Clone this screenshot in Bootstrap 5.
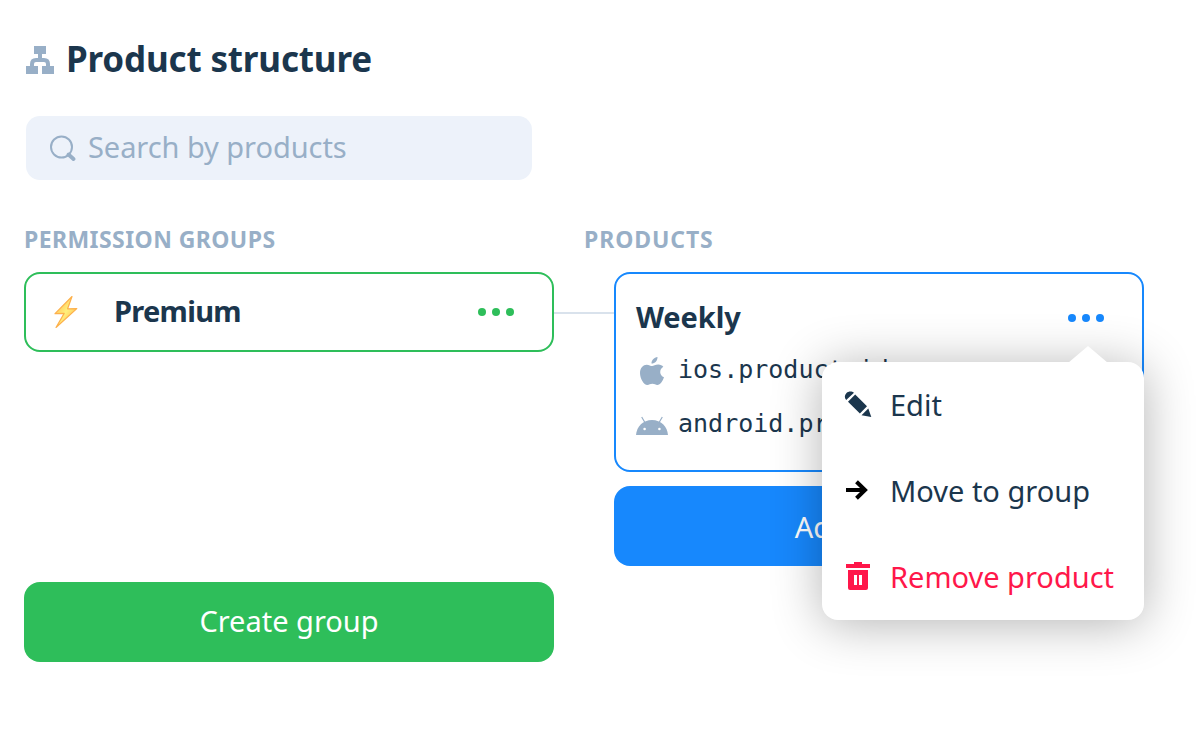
<!DOCTYPE html>
<html lang="en">
<head>
<meta charset="utf-8">
<meta name="viewport" content="width=device-width, initial-scale=1">
<title>Product structure</title>
<link href="https://cdn.jsdelivr.net/npm/bootstrap@5.3.0/dist/css/bootstrap.min.css" rel="stylesheet">
<style>
  :root { --ink: #1b364d; --muted: #98afc7; --green: #2ebe5a; --blue: #1788fd; --red: #ff174a; }
  body { font-family: "Noto Sans", "Open Sans", sans-serif; color: var(--ink); font-size: 29px; line-height: 40px; background: #fff; min-height: 100vh; }
  svg { display: block; flex: none; }
  .page { padding: 35px 52px 0 24px; }
  .page-title { font-size: 35px; line-height: 48px; font-weight: 700; letter-spacing: -.17px; padding: 0 0 2px 10px; }
  .search-box { width: 506px; height: 64px; margin: 31px 0 0 2px; padding-left: 24px; border-radius: 14px; background: #edf2fa; color: var(--muted); gap: 12px; }
  .search-box span { padding-bottom: 2px; letter-spacing: -.06px; }
  .structure { margin-top: 43px; }
  .col-groups { width: 530px; }
  .col-products { width: 560px; }
  .col-products > .stack { margin-left: 30px; }
  .section-label { font-size: 23px; line-height: 32px; font-weight: 700; color: var(--muted); margin-bottom: 17px; letter-spacing: .42px; }
  .section-label.products { letter-spacing: .9px; }
  .group-box { height: 80px; border: 2px solid var(--green); border-radius: 16px; padding: 0 38px 0 24px; }
  .item-name { font-weight: 700; padding-bottom: 2px; letter-spacing: -.1px; }
  .group-box .item-name { margin-left: 32px; letter-spacing: -.7px; }
  .link-line { width: 60px; height: 2px; background: #d9e2ec; margin: 89px -30px 0 0; flex: none; }
  .product-box { height: 200px; border: 2px solid var(--blue); border-radius: 16px; padding: 23px 38px 0 20px; }
  .store-id { font-family: "DejaVu Sans Mono", monospace; font-size: 25px; line-height: 40px; white-space: nowrap; gap: 10px; }
  .store-id svg { margin-top: 2px; }
  .store-ios { margin-top: 11px; }
  .store-android { margin-top: 14px; }
  .btn-wide { height: 80px; border: 0; border-radius: 16px; color: #fff; font-size: 29px; line-height: 40px; padding: 0 0 2px; }
  .btn-green { background: var(--green); margin-top: 230px; }
  .btn-blue { background: var(--blue); margin-top: 14px; padding: 2px 0 0; }
  .actions { position: absolute; top: 90px; right: 0; width: 322px; height: 258px; border-radius: 16px; background: #fff; box-shadow: 0 4px 50px rgba(0,0,0,.3); padding: 23px 0 0 22px; z-index: 2; }
  .actions::before { content: ""; position: absolute; top: -16px; left: 246px; width: 40px; height: 17px; background: #fff; clip-path: polygon(50% 0, 100% 100%, 0 100%); }
  .action { height: 40px; margin-bottom: 46px; gap: 18px; white-space: nowrap; }
  .action-danger { color: var(--red); }
</style>
</head>
<body>
<main class="page">
  <header class="d-flex align-items-center">
    <svg width="32" height="32" viewBox="0 0 32 32" fill="#98afc7"><path d="M10 2h12v8H10zM2 22h12v8H2zM18 22h12v8H18z"/><path d="M16 10v6M8 22v-2q0-4 4-4h8q4 0 4 4v2" fill="none" stroke="#98afc7" stroke-width="4"/></svg>
    <h1 class="page-title mb-0">Product structure</h1>
  </header>
  <div class="search-box d-flex align-items-center">
    <svg width="26" height="26" viewBox="0 0 26 26" fill="none" stroke="#98afc7"><circle cx="11.500" cy="12" r="10.500" stroke-width="2"/><path d="m18.500 19.500 5 4.500" stroke-width="3.800" stroke-linecap="round"/></svg>
    <span>Search by products</span>
  </div>
  <div class="structure d-flex align-items-start">
    <section class="col-groups flex-shrink-0">
      <div class="section-label">PERMISSION GROUPS</div>
      <div class="group-box d-flex align-items-center">
        <svg width="32" height="36" viewBox="0 0 32 36"><defs><linearGradient id="bolt" x1="0" y1="0" x2="1" y2="1"><stop offset="0" stop-color="#ffac48"/><stop offset=".5" stop-color="#fff07c"/><stop offset="1" stop-color="#ff9c37"/></linearGradient></defs><path d="M22 2.500 5 19.700l9.200-.3L6 33.500 26.800 14.600l-9.200.2z" fill="url(#bolt)" stroke="#fdb04c" stroke-width="1.200" stroke-linejoin="round"/></svg>
        <span class="item-name">Premium</span>
        <svg class="ms-auto" width="36" height="8" viewBox="0 0 36 8" fill="#2ebe5a"><circle cx="4" cy="4" r="4"/><circle cx="18" cy="4" r="4"/><circle cx="32" cy="4" r="4"/></svg>
      </div>
      <button type="button" class="btn btn-wide btn-green w-100">Create group</button>
    </section>
    <div class="link-line"></div>
    <section class="col-products flex-shrink-0">
      <div class="section-label products">PRODUCTS</div>
      <div class="stack position-relative">
        <div class="product-box">
          <div class="d-flex align-items-center">
            <span class="item-name">Weekly</span>
            <svg class="ms-auto" width="36" height="8" viewBox="0 0 36 8" fill="#1788fd"><circle cx="4" cy="4" r="4"/><circle cx="18" cy="4" r="4"/><circle cx="32" cy="4" r="4"/></svg>
          </div>
          <div class="store-id store-ios d-flex align-items-center">
            <svg width="32" height="32" viewBox="0 0 32 32" fill="#98afc7"><path d="M21.500 2c.2 3.700-2.700 6.700-6 6.600C15.300 5.400 18 2.400 21.500 2zM27.300 11.800c-4.500 2.800-3.800 8.700.7 10.500-1.200 3.400-3.700 7.700-6.600 7.700-2 0-2.600-1.200-5-1.200s-3.100 1.200-5 1.200C7.800 30 4 23.300 4 17.900c0-5.200 3.300-8.200 6.700-8.200 2.300 0 4 1.400 5.500 1.400 1.300 0 3.500-1.600 6.200-1.500 2.100.1 3.800.9 4.900 2.200z"/></svg>
            <span>ios.product_id</span>
          </div>
          <div class="store-id store-android d-flex align-items-center">
            <svg width="32" height="32" viewBox="0 0 32 32"><path d="M0 26C.700 17.500 7 11 16 11s15.300 6.500 16 15z" fill="#98afc7"/><path d="m5.700 8 3.800 6.500M26.300 8l-3.800 6.500" stroke="#98afc7" stroke-width="1.200"/><circle cx="8.600" cy="20" r="1.300" fill="#fff"/><circle cx="23.400" cy="20" r="1.300" fill="#fff"/></svg>
            <span>android.prod</span>
          </div>
        </div>
        <button type="button" class="btn btn-wide btn-blue w-100">Add product</button>
        <div class="actions">
          <div class="action d-flex align-items-center">
            <svg width="28" height="28" viewBox="0 0 28 28" fill="#1b364d"><path d="M2.200 9C.2 7 .5 4 2.500 2S8 0 10 1.800zM4 10.800l7.200-7.200L23 15.300 15.900 22.500zM17.500 24.200l6.800-6.800L27.300 26z"/></svg>
            <span>Edit</span>
          </div>
          <div class="action d-flex align-items-center">
            <svg width="28" height="28" viewBox="0 0 28 28" fill="none" stroke="#000" stroke-width="4"><path d="M2 13h18M12.500 4.800 21 13l-8.500 8.200"/></svg>
            <span>Move to group</span>
          </div>
          <div class="action action-danger d-flex align-items-center">
            <svg width="28" height="32" viewBox="0 0 28 32" fill="#ff174a"><path d="M10 1h8v2h8v4H2V3h8zM4 9h20v18q0 2-2 2H6q-2 0-2-2zm6 5v10h3V14zm5 0v10h3V14z" fill-rule="evenodd"/></svg>
            <span>Remove product</span>
          </div>
        </div>
      </div>
    </section>
  </div>
</main>
<script src="https://cdn.jsdelivr.net/npm/bootstrap@5.3.0/dist/js/bootstrap.bundle.min.js"></script>
</body>
</html>
